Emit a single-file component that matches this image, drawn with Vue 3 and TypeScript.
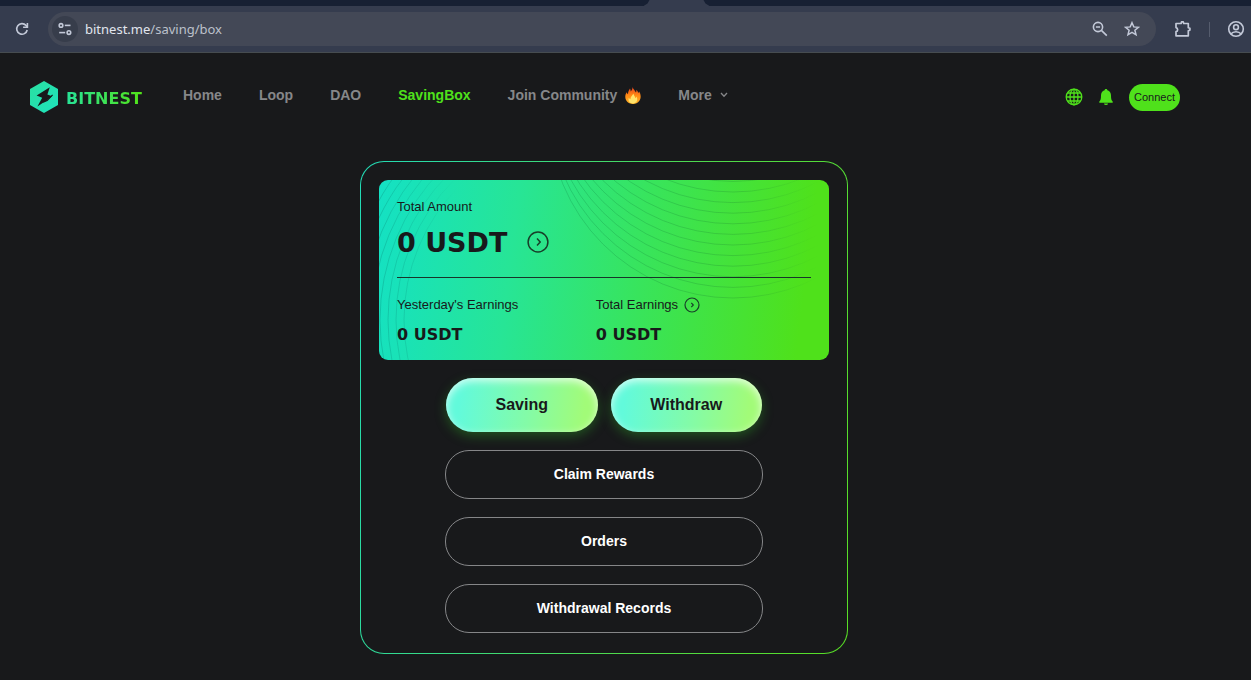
<script setup lang="ts">
import { ref } from 'vue'

interface NavItem {
  label: string
  active?: boolean
  icon?: 'fire' | 'chevron'
}

const address = ref('bitnest.me/saving/box')

const navItems: NavItem[] = [
  { label: 'Home' },
  { label: 'Loop' },
  { label: 'DAO' },
  { label: 'SavingBox', active: true },
  { label: 'Join Community', icon: 'fire' },
  { label: 'More', icon: 'chevron' },
]

const records: string[] = ['Claim Rewards', 'Orders', 'Withdrawal Records']

const rightRings: number[] = Array.from({ length: 12 }, (_, i) => -66 - i * 10.6)
const leftRings: number[] = Array.from({ length: 9 }, (_, i) => 190 + i * 8)
</script>

<template>
  <div class="window">
    <div class="tabstrip"><div class="tab"></div></div>
    <div class="toolbar">
      <button class="tool" type="button" aria-label="Reload">
        <svg width="16" height="16" viewBox="0 0 16 16" fill="none" stroke="currentColor" stroke-width="1.6">
          <path d="M13.200 9A5.300 5.300 0 1 1 12 4.400L13.300 5.800" />
          <path d="M13.400 2v4.300H9.100" />
        </svg>
      </button>
      <div class="omnibox">
        <button class="site" type="button" aria-label="Site information">
          <svg width="14" height="14" viewBox="0 0 14 14" fill="none" stroke="currentColor" stroke-width="1.6">
            <circle cx="3" cy="3.4" r="1.8" /><path d="M6.800 3.4H12.500" />
            <circle cx="10.900" cy="10.6" r="1.8" /><path d="M1.200 10.6H7.200" />
          </svg>
        </button>
        <label class="url">
          <input v-model="address" type="text" aria-label="Address" />
          <span class="url-text" aria-hidden="true"><b>bitnest.me</b>/saving/box</span>
        </label>
        <button class="tool" type="button" aria-label="Zoom">
          <svg width="16" height="16" viewBox="0 0 16 16" fill="none" stroke="currentColor" stroke-width="1.6">
            <circle cx="6" cy="6" r="4.6" /><path d="M9.4 9.4l5.400 5.200M3.900 6h4.2" />
          </svg>
        </button>
        <button class="tool" type="button" aria-label="Bookmark">
          <svg width="16" height="16" viewBox="0 0 16 16" fill="none" stroke="currentColor" stroke-width="1.5">
            <path d="M8 1.7l1.8 4.2 4.6.4-3.5 3 1.1 4.5L8 11.4l-4 2.4 1.1-4.500-3.500-3 4.600-.4z" />
          </svg>
        </button>
      </div>
      <button class="tool" type="button" aria-label="Extensions">
        <svg width="18" height="18" viewBox="0 0 18 18" fill="none" stroke="currentColor" stroke-width="1.7">
          <path d="M2 3.500h5.100l.4-1.600h1.800l.4 1.600h4.600v4.200l1.600.6v1.800l-1.600.6v5.100H2v-4.100a2.100 2.100 0 0 0 0-4.100z" stroke-linejoin="round" />
        </svg>
      </button>
      <span class="divider"></span>
      <button class="tool" type="button" aria-label="Profile">
        <svg width="18" height="18" viewBox="0 0 18 18" fill="none" stroke="currentColor" stroke-width="1.6">
          <circle cx="9" cy="9" r="7.300" /><circle cx="9" cy="7.200" r="2.400" />
          <path d="M3.800 14c2.600-3.100 7.800-3.100 10.400 0" />
        </svg>
      </button>
    </div>

    <div class="page">
      <header class="header">
        <a class="brand" href="#">
          <svg width="28" height="32" viewBox="0 0 28 32">
            <defs>
              <linearGradient id="hex" x1="0" y1="0" x2="1" y2="1">
                <stop offset="0" stop-color="#2be0a0" /><stop offset="1" stop-color="#1de2bd" />
              </linearGradient>
            </defs>
            <path d="M14 0l14 8v16l-14 8L0 24V8z" fill="url(#hex)" />
            <path d="M19.800 6.200L6.600 14.600l5.600 2.200-4.800 8.800 9-6.200 5.600-4.200-4.600-1.800z" fill="#18191b" />
            <path d="M22.600 13.800l-5.400 5.600-4 1.800" fill="none" stroke="#18191b" stroke-width="1.200" />
          </svg>
          <span>BITNEST</span>
        </a>
        <nav class="nav" aria-label="Main">
          <a v-for="item in navItems" :key="item.label" href="#" :class="{ active: item.active }">
            {{ item.label }}
            <svg v-if="item.icon === 'fire'" width="16" height="17" viewBox="0 0 16 17">
              <defs>
                <linearGradient id="flame" x1="0" y1="0" x2="0" y2="1">
                  <stop offset="0" stop-color="#e8401c" /><stop offset=".5" stop-color="#ff8a14" />
                  <stop offset="1" stop-color="#ffb52a" />
                </linearGradient>
              </defs>
              <path d="M7.5 0c.6 2.2 2.7 3.6 3.4 5.6.5-.8.6-1.8.4-2.8 1.1.8 1.7 2 1.8 3.2.5-.4.9-.9 1.1-1.5 1.6 2.6 2.200 6.300.2 9.300-1.600 2.300-4 3.200-6.400 3.200-3.800 0-7.500-2.400-7.700-6.700-.1-2 .5-3.700 1.500-5 .2.900.6 1.600 1.200 2C2.900 4.500 4.300 2.600 5 1.500c.5 1 .7 2 .7 3C7 3.400 7.600 1.700 7.500 0z" fill="url(#flame)" />
              <path d="M8.400 6.500c.3 2 1.800 3 2.100 4.700.6-.4.900-1 1-1.700 1.900 3.200.1 6.900-3.500 6.900-3.300 0-5.200-2.500-4.200-5.700.5.900 1 1.300 1.700 1.500-.1-2.400 1.800-3.700 2.900-5.700z" fill="#ffe36b" />
            </svg>
            <svg v-else-if="item.icon === 'chevron'" width="8" height="6" viewBox="0 0 8 6" fill="none" stroke="currentColor" stroke-width="1.3">
              <path d="M1 1l3 3.300L7 1" />
            </svg>
          </a>
        </nav>
        <div class="actions">
          <button class="icon" type="button" aria-label="Language">
            <svg width="18" height="18" viewBox="0 0 18 18" fill="none" stroke="currentColor" stroke-width="1.300">
              <circle cx="9" cy="9" r="7.800" /><ellipse cx="9" cy="9" rx="4" ry="7.800" />
              <path d="M9 1v16M1 9h16M2.300 5h13.400M2.300 13h13.400" />
            </svg>
          </button>
          <button class="icon" type="button" aria-label="Notifications">
            <svg width="14" height="18" viewBox="0 0 14 18" fill="currentColor">
              <path d="M7 1c.8 0 1.300.5 1.400 1.300 2.500.7 3.600 2.700 3.600 5.200 0 3.200.3 4.500 1.700 6v1.300H.3v-1.300c1.400-1.500 1.700-2.800 1.700-6 0-2.500 1.100-4.500 3.600-5.200C5.700 1.500 6.200 1 7 1zM5 15.600h4a2 1.500 0 0 1-4 0z" />
            </svg>
          </button>
          <button class="connect" type="button">Connect</button>
        </div>
      </header>

      <main class="box">
        <section class="summary">
          <svg class="rings" viewBox="0 0 450 180" preserveAspectRatio="xMidYMin slice" fill="none" aria-hidden="true">
            <defs>
              <linearGradient id="fadeRight" gradientUnits="userSpaceOnUse" x1="180" y1="0" x2="440" y2="0">
                <stop offset="0" stop-color="#087a3c" stop-opacity=".3" />
                <stop offset=".7" stop-color="#187a2c" stop-opacity=".3" />
                <stop offset="1" stop-color="#187a2c" stop-opacity="0" />
              </linearGradient>
              <linearGradient id="fadeLeft" gradientUnits="userSpaceOnUse" x1="0" y1="0" x2="80" y2="0">
                <stop offset="0" stop-color="#078a78" stop-opacity=".42" />
                <stop offset="1" stop-color="#078a78" stop-opacity="0" />
              </linearGradient>
            </defs>
            <circle v-for="cy in rightRings" :key="`r${cy}`" cx="354" :cy="cy" r="184" stroke="url(#fadeRight)" stroke-width=".8" />
            <circle v-for="r in leftRings" :key="`l${r}`" cx="215" cy="140" :r="r" stroke="url(#fadeLeft)" stroke-width=".8" />
          </svg>
          <div class="total">
            <p class="caption">Total Amount</p>
            <div class="line">
              <strong class="amount">0 USDT</strong>
              <button class="go" type="button" aria-label="Total amount details">
                <svg width="22" height="22" viewBox="0 0 22 22" fill="none" stroke="currentColor" stroke-width="1.500">
                  <circle cx="11" cy="11" r="9.900" /><path d="M10 7.500l3.200 3.500-3.200 3.500" />
                </svg>
              </button>
            </div>
          </div>
          <div class="earnings">
            <div>
              <p class="caption">Yesterday's Earnings</p>
              <strong class="value">0 USDT</strong>
            </div>
            <div>
              <p class="caption">
                Total Earnings
                <button class="go" type="button" aria-label="Total earnings details">
                  <svg width="16" height="16" viewBox="0 0 16 16" fill="none" stroke="currentColor" stroke-width="1.200">
                    <circle cx="8" cy="8" r="7" /><path d="M7.300 5.800l2 2.200-2 2.200" />
                  </svg>
                </button>
              </p>
              <strong class="value">0 USDT</strong>
            </div>
          </div>
        </section>

        <div class="controls">
          <div class="pair">
            <button class="primary" type="button">Saving</button>
            <button class="primary" type="button">Withdraw</button>
          </div>
          <button v-for="record in records" :key="record" class="outline" type="button">{{ record }}</button>
        </div>
      </main>
    </div>
  </div>
</template>

<style>
body {
  margin: 0;
  background: #18191b;
}
</style>

<style scoped>
* {
  box-sizing: border-box;
}
.window {
  min-height: 100vh;
  font-family: "Liberation Sans", Arial, sans-serif;
  color: #18191b;
}
button {
  padding: 0;
  border: 0;
  background: none;
  color: inherit;
  font: inherit;
  cursor: pointer;
}
svg {
  display: block;
  flex: none;
}
a {
  text-decoration: none;
}
.tabstrip {
  display: flex;
  justify-content: center;
  height: 6px;
  padding-left: 102px;
  background: #172033;
}
.tab {
  width: 66px;
  background: #353c4e;
  clip-path: polygon(6px 0, 60px 0, 62px 60%, 66px 100%, 0 100%, 4px 60%);
}
.toolbar {
  display: flex;
  align-items: center;
  height: 47px;
  padding: 0 6px 0 14px;
  background: #353c4e;
  border-bottom: 1px solid #464c50;
  color: #c3c9d8;
}
.omnibox {
  display: flex;
  flex: 1;
  align-items: center;
  gap: 16px;
  height: 34px;
  margin: 0 18px;
  padding: 0 16px 0 4px;
  border-radius: 17px;
  background: #434856;
}
.site {
  display: grid;
  place-items: center;
  width: 26px;
  height: 26px;
  border-radius: 50%;
  background: #373d4b;
}
.url {
  display: grid;
  flex: 1;
  align-items: center;
  margin-left: -9px;
  font: 13px "Noto Sans", "Open Sans", sans-serif;
}
.url input,
.url-text {
  grid-area: 1 / 1;
}
.url input {
  min-width: 0;
  padding: 0;
  border: 0;
  outline: 0;
  background: none;
  color: transparent;
  font: inherit;
}
.url-text {
  pointer-events: none;
  color: #bcc1cb;
}
.url-text b {
  color: #e1e5ee;
  font-weight: 400;
}
.divider {
  width: 1px;
  height: 15px;
  margin: 0 17px;
  background: #555c6d;
}
.page {
  padding-right: 43px;
}
.header {
  display: flex;
  align-items: center;
  height: 88px;
  padding: 0 28px 0 30px;
}
.brand {
  display: flex;
  align-items: center;
  gap: 8px;
  width: 153px;
  font: 700 16px "DejaVu Sans", sans-serif;
}
.brand span {
  padding-top: 2px;
  background: linear-gradient(90deg, #27e298, #52e318);
  background-clip: text;
  color: transparent;
}
.nav {
  display: flex;
  flex: 1;
  gap: 37px;
  padding-bottom: 4px;
  font-size: 14px;
  font-weight: 700;
  line-height: 20px;
}
.nav a {
  display: flex;
  align-items: center;
  gap: 8px;
  color: #868789;
  white-space: nowrap;
}
.nav .active {
  color: #4fe11b;
}
.actions {
  display: flex;
  align-items: center;
  gap: 16px;
  color: #4fe11b;
}
.connect {
  width: 51px;
  height: 27px;
  border-radius: 14px;
  background: #4fe11b;
  color: #18191b;
  font-size: 11px;
}
.box {
  max-width: 488px;
  margin: 20px auto 24px;
  padding: 18px 18px 20px;
  border: 1px solid transparent;
  border-radius: 24px;
  background:
    linear-gradient(#18191b, #18191b) padding-box,
    linear-gradient(100deg, #22dcb8, #4fd94c 60%, #58df25) border-box;
}
.summary {
  position: relative;
  overflow: hidden;
  height: 180px;
  padding: 18px;
  border-radius: 9px;
  background: linear-gradient(97deg, #14e1c4 0%, #27e596 30%, #38e45c 58%, #4fe11b 93%);
}
.rings {
  position: absolute;
  inset: 0;
  width: 100%;
  height: 100%;
}
.total,
.earnings {
  position: relative;
}
.total {
  height: 80px;
  border-bottom: 1px solid #18352a;
}
.caption {
  display: flex;
  align-items: center;
  gap: 6px;
  height: 18px;
  margin: 0;
  font-size: 13px;
  line-height: 18px;
}
.line {
  display: flex;
  align-items: center;
  gap: 20px;
  height: 52px;
}
.amount,
.value {
  font-family: "DejaVu Sans", sans-serif;
  font-weight: 700;
}
.amount {
  font-size: 27px;
}
.value {
  display: block;
  margin-top: 10px;
  font-size: 16px;
  line-height: 22px;
}
.go {
  color: #18402a;
}
.earnings {
  display: grid;
  grid-template-columns: 48% 52%;
  padding-top: 18px;
}
.controls {
  display: grid;
  gap: 18px;
  max-width: 318px;
  margin: 18px auto 0;
}
.pair {
  display: grid;
  grid-template-columns: 1fr 1fr;
  gap: 13px;
  padding: 0 1px;
}
.primary {
  height: 54px;
  border-radius: 27px;
  background: linear-gradient(97deg, #62fadb 10%, #84fba6 55%, #a2fb78 90%);
  box-shadow:
    inset 0 3px 9px rgba(255, 255, 255, 0.75),
    0 4px 12px rgba(50, 190, 40, 0.35);
  font-size: 16px;
  font-weight: 700;
}
.outline {
  height: 49px;
  padding-bottom: 2px;
  border: 1px solid #858688;
  border-radius: 24px;
  color: #fff;
  font-size: 14px;
  font-weight: 700;
}
</style>
